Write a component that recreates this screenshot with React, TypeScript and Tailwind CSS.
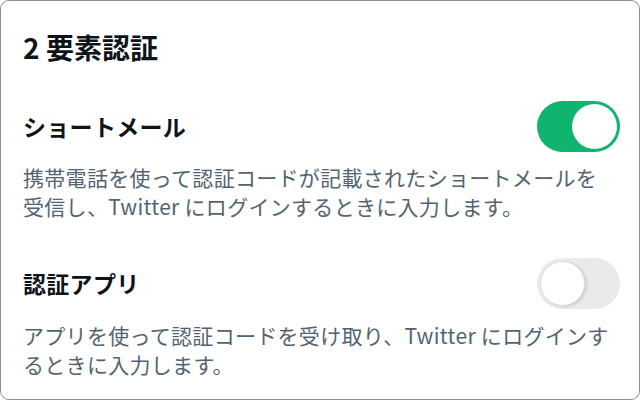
import React, { useState } from 'react';

const font = { fontFamily: '"Noto Sans CJK JP", "Noto Sans", sans-serif' };

interface ToggleProps {
  on: boolean;
  onChange: () => void;
}

const Toggle: React.FC<ToggleProps> = ({ on, onChange }) => (
  <button
    onClick={onChange}
    className={`relative w-[83px] h-[51px] rounded-full shrink-0 transition-colors ${
      on ? 'bg-[#10b46f]' : 'bg-[#e9eaeb]'
    }`}
  >
    <span
      className={`absolute top-[3px] w-[45px] h-[45px] rounded-full bg-white transition-all ${
        on ? 'left-[35px]' : 'left-[3px] border border-[#dcdfe1] shadow-[2px_1px_3px_rgba(0,0,0,0.12)]'
      }`}
    />
  </button>
);

export default function App() {
  const [sms, setSms] = useState(true);
  const [app, setApp] = useState(false);

  return (
    <div className="w-[640px] h-[400px] bg-white" style={font}>
      <div className="h-full border border-[#8f8f8f] rounded-[9px] pl-[22px] pr-[19px] pt-[26px]">
        <h1 className="text-[28px] leading-[40px] font-bold text-[#0f1419]">2 要素認証</h1>

        <div className="mt-[34px] flex items-center justify-between">
          <h2 className="text-[23px] tracking-[0.3px] font-bold text-[#0f1419]">ショートメール</h2>
          <Toggle on={sms} onChange={() => setSms(!sms)} />
        </div>
        <p className="mt-[11px] max-w-[590px] text-[21px] tracking-[0.3px] leading-[29px] text-[#536471]">
          携帯電話を使って認証コードが記載されたショートメールを受信し、Twitter にログインするときに入力します。
        </p>

        <div className="mt-[37px] flex items-center justify-between">
          <h2 className="text-[23px] tracking-[0.3px] font-bold text-[#0f1419]">認証アプリ</h2>
          <Toggle on={app} onChange={() => setApp(!app)} />
        </div>
        <p className="mt-[12px] max-w-[590px] text-[21px] tracking-[0.3px] leading-[29px] text-[#536471]">
          アプリを使って認証コードを受け取り、Twitter にログインするときに入力します。
        </p>
      </div>
    </div>
  );
}
